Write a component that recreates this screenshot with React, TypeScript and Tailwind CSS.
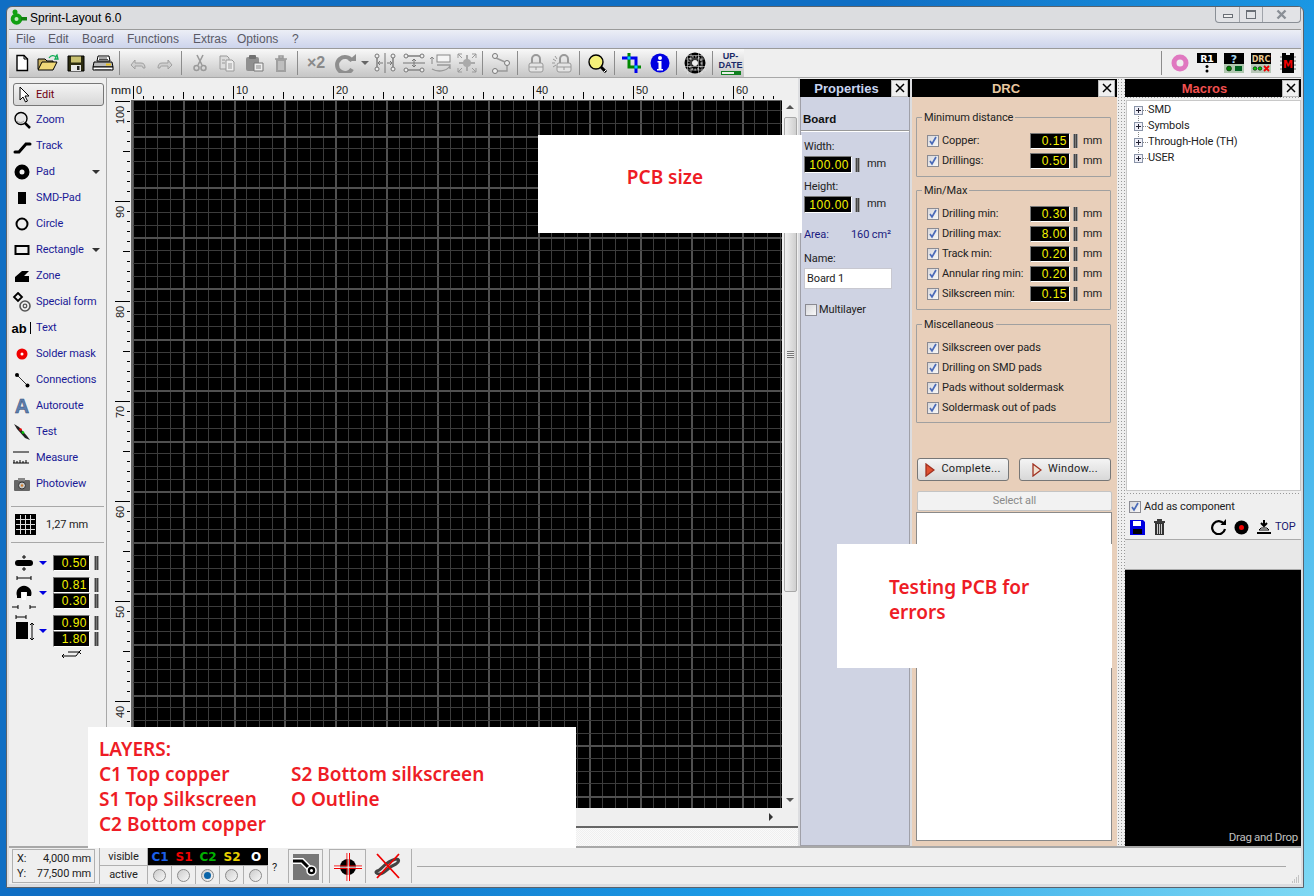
import React from "react";

const ui = "font-['Roboto',Arial,sans-serif] tracking-[-0.1px]";
const lib = "font-['Liberation_Sans',Arial,sans-serif] tracking-normal";

function S({ w = 20, h = 20, children }: { w?: number; h?: number; children: React.ReactNode }) {
  return (
    <svg width={w} height={h} viewBox={`0 0 ${w} ${h}`} className="block shrink-0">
      {children}
    </svg>
  );
}

const G = "#9a9a9a";

const tb: Record<string, React.ReactNode> = {
  newf: (
    <S><path d="M5 2.500h7l3.500 3.500v11.500H5z" fill="#fff" stroke="#000" strokeWidth="1.400" /><path d="M12 2.500v3.500h3.500" fill="none" stroke="#000" /></S>
  ),
  open: (
    <S w={24}><path d="M2 6h7l2 2h6v8H2z" fill="#c8b060" stroke="#000" /><path d="M2 17l4-8h15l-4 8z" fill="#f0d878" stroke="#000" /><path d="M13 5c2-3 5-3 7-1l-1 2 3 0-1-4-1 1" fill="none" stroke="#1a5" strokeWidth="1.300" /></S>
  ),
  save: (
    <S><path d="M2 3h16v15H2z" fill="#2c2c10" stroke="#000" /><rect x="5" y="3.500" width="10" height="6" fill="#c8c070" /><rect x="5" y="12" width="10" height="6" fill="#e8e8e8" /><rect x="11" y="13" width="2.500" height="4" fill="#222" /></S>
  ),
  print: (
    <S w={24}><path d="M7 3h11l1 5H6z" fill="#fff" stroke="#000" /><path d="M8 5h8M8 6.500h9" stroke="#000" strokeWidth=".7" /><path d="M3 9h18l1 5H2z" fill="#bbb" stroke="#000" /><path d="M2 14h20v3H2z" fill="#fff" stroke="#000" /><path d="M4 16.500h16" stroke="#555" /><rect x="15" y="10.500" width="5" height="2" fill="#e8c020" /></S>
  ),
  undo: (
    <S w={22}><path d="M4 12l4-5v3h6c3 0 4 2 4 5h-2c0-2-1-2-3-2H8v3z" fill="#cfcfcf" stroke="#a0a0a0" /></S>
  ),
  redo: (
    <S w={22}><path d="M18 12l-4-5v3H8c-3 0-4 2-4 5h2c0-2 1-2 3-2h5v3z" fill="#cfcfcf" stroke="#a0a0a0" /></S>
  ),
  cut: (
    <S><path d="M7 2l5 10M13 2l-5 10" stroke={G} strokeWidth="1.600" /><circle cx="6.500" cy="15" r="2.500" fill="none" stroke={G} strokeWidth="1.500" /><circle cx="13.500" cy="15" r="2.500" fill="none" stroke={G} strokeWidth="1.500" /></S>
  ),
  copy: (
    <S><path d="M3 3h7l2 2v11H3z" fill="#ddd" stroke={G} /><path d="M9 7h6l2 2v9H9z" fill="#eee" stroke={G} /><path d="M5 7h3M5 10h3M11 11h4M11 13h4M11 15h4" stroke={G} /></S>
  ),
  paste: (
    <S w={22}><rect x="3" y="4" width="13" height="14" rx="2" fill="#909090" /><rect x="6" y="2" width="7" height="4" rx="1" fill="#707070" /><path d="M11 10h9v8h-9z" fill="#eee" stroke="#777" /><path d="M13 13h5M13 15h5" stroke="#888" /></S>
  ),
  trash: (
    <S><path d="M4 6h12M8 3h4v2H8z" stroke={G} strokeWidth="1.500" fill="none" /><rect x="5" y="6" width="10" height="13" fill="#a0a0a0" /><path d="M8 8v9M10 8v9M12 8v9" stroke="#ddd" /></S>
  ),
  rotate: (
    <S w={24}><path d="M19 8a8 8 0 1 0 0 8" fill="none" stroke="#8e8e8e" strokeWidth="4" /><path d="M15 8h8V1z" fill="#8e8e8e" /></S>
  ),
  mirror: (
    <S w={28} h={22}><path d="M14 1v20" stroke="#777" /><path d="M6 4v13M22 4v13" stroke="#999" strokeWidth="2" /><circle cx="6" cy="4" r="2" fill="#eee" stroke="#777" /><circle cx="6" cy="17" r="2" fill="#eee" stroke="#777" /><circle cx="22" cy="4" r="2" fill="#eee" stroke="#777" /><circle cx="22" cy="17" r="2" fill="#eee" stroke="#777" /><path d="M8 11h4M16 11h4M9 9l-2 2 2 2M19 9l2 2-2 2" stroke="#777" fill="none" /></S>
  ),
  mirror2: (
    <S w={28} h={22}><path d="M3 11h22" stroke="#777" /><path d="M7 4h14M7 18h14" stroke="#999" strokeWidth="2" /><circle cx="6" cy="4" r="2" fill="#eee" stroke="#777" /><circle cx="22" cy="4" r="2" fill="#eee" stroke="#777" /><circle cx="6" cy="18" r="2" fill="#eee" stroke="#777" /><circle cx="22" cy="18" r="2" fill="#eee" stroke="#777" /><path d="M14 7v8M12 9l2-2 2 2M12 13l2 2 2-2" stroke="#777" fill="none" /></S>
  ),
  flip: (
    <S w={26} h={22}><path d="M4 12V5M2 7l2-2 2 2" stroke="#888" fill="none" /><rect x="9" y="3" width="13" height="7" fill="#f4f4f4" stroke="#888" /><path d="M4 17c5 3 14 3 18-3M9 13l13 0v4" fill="none" stroke="#999" strokeWidth="1.300" /></S>
  ),
  align: (
    <S w={24} h={22}><circle cx="12" cy="11" r="4" fill="#aaa" /><path d="M12 3v16M4 11h16" stroke="#aaa" strokeWidth="2" /><path d="M3 2l4 4M21 2l-4 4M3 20l4-4M21 20l-4-4M3 6V2h4M21 6V2h-4M3 16v4h4M21 16v4h-4" stroke="#999" fill="none" /></S>
  ),
  conn: (
    <S w={22} h={22}><circle cx="5" cy="4" r="2.500" fill="#eee" stroke="#777" /><circle cx="17" cy="11" r="2.500" fill="#eee" stroke="#777" /><circle cx="5" cy="19" r="2.500" fill="#eee" stroke="#777" /><path d="M6 6l9 4M8 19h9v-5" stroke="#999" strokeWidth="1.400" fill="none" /></S>
  ),
  lock: (
    <S><path d="M6 10V6a4 4 0 0 1 8 0v4" fill="none" stroke="#999" strokeWidth="2" /><rect x="3" y="10" width="14" height="9" rx="2" fill="#e4e4e4" stroke="#999" /><path d="M3 14h14M10 14v3" stroke="#999" /></S>
  ),
  lock2: (
    <S w={22}><path d="M8 10V6a4 4 0 0 1 8 0v4" fill="none" stroke="#999" strokeWidth="2" /><rect x="5" y="10" width="14" height="9" rx="2" fill="#e4e4e4" stroke="#999" /><path d="M5 14h14M12 14v3M1 6l3 2M0 10h3M1 14l3-2M3 3l2 3" stroke="#999" /></S>
  ),
  mag: (
    <S w={22}><circle cx="9" cy="9" r="7" fill="#f4f07a" stroke="#000" strokeWidth="1.400" /><path d="M14 14l5 5" stroke="#000" strokeWidth="3" /><path d="M17 19l2-2" stroke="#fff" /></S>
  ),
  crop: (
    <S w={22} h={22}>
      <path d="M7 1V15H19" fill="none" stroke="#008800" strokeWidth="3" />
      <path d="M0 6H14V21" fill="none" stroke="#0000ee" strokeWidth="3" />
      <rect x="5.500" y="4.500" width="3" height="3" fill="#00d8e8" />
      <rect x="12.500" y="13.500" width="3" height="3" fill="#00d8e8" />
    </S>
  ),
  info: (
    <S><circle cx="10" cy="10" r="9.500" fill="#0000e0" /><circle cx="10" cy="5" r="2" fill="#fff" /><path d="M7.500 8h4v8h1.500v1.500H7V16h1.500V9.500h-1z" fill="#fff" /></S>
  ),
  disc: (
    <S w={22} h={22}>
      <circle cx="11" cy="11" r="10.500" fill="#000" />
      <circle cx="11" cy="11" r="3" fill="#eee" />
      <circle cx="11" cy="11" r="6.500" fill="none" stroke="#8a8a8a" strokeWidth="2" strokeDasharray="1.500 1.500" />
      <path d="M0 3.500h22M0 7h22M0 14.500h22M0 18h22M3.500 0v22M7 0v22M14.500 0v22M18 0v22" stroke="#efefef" strokeWidth=".5" />
    </S>
  ),
  update: (
    <div className={`flex flex-col items-center w-[22px] mt-[1px] ${lib}`}>
      <span className="text-[9px] leading-[8px] font-bold text-[#1a2a68]">UP-</span>
      <span className="text-[9px] leading-[10px] font-bold text-[#1a2a68]">DATE</span>
      <span className="block w-[20px] h-[4px] mt-[1px] bg-[#108020] border border-[#108020] pr-[6px]"><span className="block h-full bg-[#e8f0e8]" /></span>
    </div>
  ),
  pink: (
    <S><circle cx="10" cy="10" r="6" fill="none" stroke="#e078c0" strokeWidth="5" /></S>
  ),
  r1: (
    <S w={22} h={22}><rect x="1" y="1" width="20" height="10" fill="#000" /><text x="11" y="9.500" textAnchor="middle" fontSize="9.500" fontWeight="700" fill="#fff" fontFamily="DejaVu Sans">R1</text><circle cx="11" cy="14.500" r="1.500" fill="#000" /><circle cx="11" cy="19" r="1.500" fill="#000" /></S>
  ),
  q: (
    <S w={22} h={22}><rect x="1" y="1" width="20" height="11" fill="#000" /><text x="11" y="10.500" textAnchor="middle" fontSize="11" fontWeight="700" fill="#a8d8f0" fontFamily="DejaVu Sans">?</text><rect x="1" y="12" width="20" height="9" fill="#b0c8b0" /><circle cx="6" cy="16.500" r="2.500" fill="#008000" stroke="#000" strokeWidth=".5" /><rect x="12" y="14" width="7" height="5" fill="#006020" /></S>
  ),
  drc: (
    <S w={22} h={22}><rect x="1" y="1" width="20" height="11" fill="#000" /><text x="11" y="10" textAnchor="middle" fontSize="8" fontWeight="700" fill="#e8c890" fontFamily="DejaVu Sans">DRC</text><rect x="1" y="12" width="20" height="9" fill="#b8c8b8" /><circle cx="5" cy="16.500" r="1.800" fill="#0c0" stroke="#000" strokeWidth=".6" /><circle cx="10" cy="16.500" r="1.800" fill="#0c0" stroke="#000" strokeWidth=".6" /><path d="M14 14l5 5M19 14l-5 5" stroke="#e00" strokeWidth="1.800" /></S>
  ),
  m: (
    <S w={22} h={22}><path d="M5 1h4v2h4V1h4v20H5z" fill="#000" /><text x="11" y="16" textAnchor="middle" fontSize="10" fontWeight="700" fill="#f00000" fontFamily="DejaVu Sans">M</text><path d="M3 5h2M3 9h2M3 13h2M3 17h2M17 5h2M17 9h2M17 13h2M17 17h2" stroke="#666" /></S>
  ),
};

function TB({ w = 27, k, children }: { w?: number; k?: string; children?: React.ReactNode }) {
  return <div className="flex items-center justify-center h-full shrink-0" style={{ width: w }}>{k ? tb[k] : children}</div>;
}

function TSep() {
  return <div className="w-px h-[24px] self-center bg-[#8c8c8c] shrink-0" />;
}

function Group({ children }: { children: React.ReactNode }) {
  return <div className="flex h-full pl-[4px] pr-[3px] shrink-0">{children}</div>;
}

function Toolbar() {
  return (
    <div className="flex h-[29px] bg-[#efefef] border-b border-[#a8a8a8] shrink-0">
      <div className="flex h-full bg-gradient-to-b from-[#f8f8f8] to-[#c6c6c6]">
        <div className="flex h-full pr-[3px]">
          <TB w={25} k="newf" /><TB w={28} k="open" /><TB w={28} k="save" /><TB w={26} k="print" />
        </div>
        <TSep />
        <Group><TB k="undo" /><TB k="redo" /></Group>
        <TSep />
        <Group><TB k="cut" /><TB k="copy" /><TB k="paste" /><TB k="trash" /></Group>
        <TSep />
        <Group>
          <TB w={28}><span className={`${lib} font-bold text-[16px] text-[#8a8a8a]`}>×2</span></TB>
          <TB w={30} k="rotate" />
          <TB w={10}><span className="block w-0 h-0 border-l-[4px] border-r-[4px] border-t-[4px] border-l-transparent border-r-transparent border-t-[#666]" /></TB>
          <TB w={30} k="mirror" /><TB k="mirror2" /><TB k="flip" /><TB w={25} k="align" />
        </Group>
        <TSep />
        <Group><TB k="conn" /></Group>
        <TSep />
        <Group><TB k="lock" /><TB k="lock2" /></Group>
        <TSep />
        <Group><TB k="mag" /></Group>
        <TSep />
        <Group><TB k="crop" /><TB k="info" /></Group>
        <TSep />
        <div className="flex h-full pl-[4px] pr-[4px]"><TB k="disc" /></div>
        <TSep />
        <div className="flex h-full pl-[4px]"><TB k="update" /></div>
      </div>
      <div className="flex h-full ml-auto bg-[#efefef]">
        <TSep />
        <div className="flex h-full pl-[4px]">
          <TB k="pink" /><TB k="r1" /><TB k="q" /><TB k="drc" /><TB k="m" />
        </div>
      </div>
    </div>
  );
}

const tools: [string, React.ReactNode, boolean?][] = [
  ["Zoom", <S key="z"><circle cx="9" cy="8.500" r="6" fill="#e8e8e8" stroke="#000" strokeWidth="1.400" /><path d="M5 11c2 2 5 2 7 0" stroke="#999" fill="none" /><path d="M13 13l5 5" stroke="#000" strokeWidth="2.500" /></S>],
  ["Track", <S key="t"><path d="M3 16h4l7-8h4" fill="none" stroke="#000" strokeWidth="3" strokeLinecap="round" /></S>],
  ["Pad", <S key="p"><circle cx="10" cy="10" r="5" fill="none" stroke="#000" strokeWidth="5" /></S>, true],
  ["SMD-Pad", <S key="s"><rect x="6" y="4" width="8" height="12" fill="#000" /></S>],
  ["Circle", <S key="c"><circle cx="10" cy="10" r="5.500" fill="none" stroke="#000" strokeWidth="2" /></S>],
  ["Rectangle", <S key="r"><rect x="3.500" y="6" width="13" height="8" fill="none" stroke="#000" strokeWidth="2" /></S>, true],
  ["Zone", <S key="zo"><path d="M3 16V11l7-6h7l-5 5h5v6z" fill="#000" /></S>],
  ["Special form", <S key="sf"><path d="M6 1l4 4-4 4-4-4z" fill="none" stroke="#000" strokeWidth="1.800" /><circle cx="13" cy="14" r="5" fill="none" stroke="#555" strokeWidth="1.600" /><circle cx="13" cy="14" r="1.800" fill="none" stroke="#555" strokeWidth="1.300" /></S>],
  ["Text", <span key="tx" className={`flex w-[20px] items-center ${lib} font-bold text-[13px] leading-none text-black -ml-[1px]`}>ab<span className="block w-px h-[12px] bg-black ml-[3px]" /></span>],
  ["Solder mask", <S key="sm"><circle cx="10" cy="10" r="3.500" fill="#fff" stroke="#f00000" strokeWidth="4" /></S>],
  ["Connections", <S key="co"><path d="M5 5l10 10" stroke="#333" /><circle cx="5" cy="5" r="2" fill="#000" /><circle cx="15.500" cy="15.500" r="2" fill="#000" /></S>],
  ["Autoroute", <S key="a"><text x="10" y="17" textAnchor="middle" fontFamily="Liberation Sans" fontWeight="700" fontSize="20" fill="#5c7fb0" stroke="#334a70" strokeWidth=".5">A</text></S>],
  ["Test", <S key="te"><path d="M2 2l5 3 8 9 3 4-5-2-8-9z" fill="#222" /><circle cx="8.500" cy="7.500" r="1.300" fill="#e00" /><circle cx="11" cy="10.500" r="1.300" fill="#0c0" /></S>],
  ["Measure", <S key="me"><path d="M1 4h16M1 15h16M2 15v-3M5 15v-2M8 15v-3M11 15v-2M14 15v-3" stroke="#000" fill="none" /></S>],
  ["Photoview", <S key="ph"><rect x="2" y="6" width="16" height="11" rx="1" fill="#666" /><rect x="6" y="4" width="7" height="3" fill="#888" /><circle cx="10" cy="11.500" r="3.500" fill="#c8c8c8" stroke="#333" /><circle cx="10" cy="11.500" r="1.200" fill="#d08030" /></S>],
];

const tip = "w-0 h-0 border-l-[4px] border-r-[4px] border-t-[4px] border-l-transparent border-r-transparent";

function Spin({ h = 14 }: { h?: number }) {
  return (
    <span
      className="block w-[5px] shrink-0 bg-[linear-gradient(to_right,#d0d0d0,#444_30%,#777_50%,#444_70%,#d0d0d0)]"
      style={{ height: h }}
    />
  );
}

function Field({ v, w = 37, h = 16 }: { v: string; w?: number; h?: number }) {
  return (
    <span
      className={`flex items-center justify-end shrink-0 bg-black border border-t-[#777] border-l-[#777] border-b-white border-r-white pr-[2px] font-['Liberation_Sans',Arial,sans-serif] tracking-[0.5px] text-[#f4f400] text-[12px] leading-none`}
      style={{ width: w, height: h }}
    >
      {v}
    </span>
  );
}

function Sidebar() {
  return (
    <div className="w-[98px] shrink-0 bg-[#efefef] border-r border-[#a8a8a8] pt-[3px] text-[11px]">
      <div className="h-[26px] flex items-center pl-[4px] pt-[1px]">
        <div className="flex items-center w-[91px] h-[23px] rounded-[3px] border border-[#777] bg-gradient-to-b from-[#f4f4f4] to-[#d8d8d8] pl-[4px]">
          <svg width="14" height="18" viewBox="0 0 14 18" className="shrink-0"><path d="M2 1v13l3-3 2.500 5 2-1-2.500-5h4z" fill="#fff" stroke="#000" /></svg>
          <span className="ml-[4px] pt-[1px] text-[#700010]">Edit</span>
        </div>
      </div>
      {tools.map(([label, icon, arrow]) => (
        <div key={label} className="h-[26px] flex items-center pl-[3px]">
          <span className="flex items-center justify-center w-[20px] h-[20px] shrink-0">{icon}</span>
          <span className="ml-[4px] pt-[1px] text-[#1a1a96] whitespace-nowrap">{label}</span>
          {arrow && <span className={`${tip} border-t-[#333] ml-auto mr-[6px]`} />}
        </div>
      ))}
      <div className="mt-[9px] mx-[2px] border-t border-[#a8a8a8]" />
      <div className="h-[35px] flex items-center pl-[6px]">
        <svg width="21" height="21" viewBox="0 0 21 21" className="shrink-0">
          <rect width="21" height="21" fill="#000" />
          <path d="M1 5.500h19M1 10.500h19M1 15.500h19M5.500 1v19M10.500 1v19M15.500 1v19" stroke="#ddd" />
        </svg>
        <span className="ml-[10px] pt-[1px] text-[#222]">1,27 mm</span>
      </div>
      <div className="mx-[2px] border-t border-[#a8a8a8]" />
      <div className="mt-[12px] flex flex-col pl-[2px]">
        <div className="flex items-center h-[16px]">
          <span className="w-[26px] flex justify-center">
            <svg width="22" height="16" viewBox="0 0 22 16"><rect x="2" y="5" width="18" height="6" rx="3" fill="#000" /><path d="M11 0v4M11 12v4M9 2h4M9 14h4" stroke="#000" /></svg>
          </span>
          <span className={`${tip} border-t-[#0000e0] ml-[2px] mr-[6px]`} />
          <Field v="0.50" /><span className="ml-[4px]"><Spin /></span>
        </div>
        <div className="flex items-center h-[32px] mt-[6px]">
          <span className="w-[26px] flex justify-center">
            <svg width="24" height="36" viewBox="0 0 24 36"><path d="M5 3h14M5 1v4M19 1v4" stroke="#000" /><path d="M5 21a7.500 7.500 0 1 1 14 0h-4v-4h-6v6H5z" fill="#000" /><rect x="10" y="17" width="4" height="8" fill="#fff" /><path d="M0 32h6M18 32h6M6 30v4M18 30v4" stroke="#000" /></svg>
          </span>
          <span className={`${tip} border-t-[#0000e0] ml-[2px] mr-[6px]`} />
          <div className="flex flex-col">
            <span className="flex items-center"><Field v="0.81" /><span className="ml-[4px]"><Spin /></span></span>
            <span className="flex items-center"><Field v="0.30" /><span className="ml-[4px]"><Spin /></span></span>
          </div>
        </div>
        <div className="flex items-center h-[32px] mt-[6px]">
          <span className="w-[26px] flex justify-center">
            <svg width="24" height="34" viewBox="0 0 24 34"><path d="M4 3h10M4 1v4M14 1v4" stroke="#000" /><rect x="4" y="8" width="12" height="17" fill="#000" /><path d="M20 9v17M18 11l2-2 2 2M18 24l2 2 2-2" stroke="#000" fill="none" /></svg>
          </span>
          <span className={`${tip} border-t-[#0000e0] ml-[2px] mr-[6px]`} />
          <div className="flex flex-col">
            <span className="flex items-center"><Field v="0.90" /><span className="ml-[4px]"><Spin /></span></span>
            <span className="flex items-center"><Field v="1.80" /><span className="ml-[4px]"><Spin /></span></span>
          </div>
        </div>
        <svg width="22" height="8" viewBox="0 0 22 8" className="ml-[50px] mt-[3px]"><path d="M1 6h14l3-4M3 4L1 6l2 2M7 2h11M18 2l2-2M18 2l2 2" stroke="#000" fill="none" /></svg>
      </div>
    </div>
  );
}

function range(n: number) {
  return Array.from({ length: n }, (_, i) => i);
}

function TopRuler() {
  return (
    <svg width="667" height="22" viewBox="0 0 667 22" className="block" shapeRendering="crispEdges">
      {range(65).map((i) => {
        const x = 2.5 + i * 10;
        const top = i % 10 === 0 ? 8 : i % 5 === 0 ? 14 : 18;
        return <path key={i} d={`M${x} ${top}V21`} stroke="#000" />;
      })}
      {range(7).map((i) => (
        <text key={i} x={5 + i * 100} y={16} fontSize="11" fontFamily="Liberation Sans" fill="#222">{i * 10}</text>
      ))}
    </svg>
  );
}

function LeftRuler() {
  return (
    <svg width="24" height="708" viewBox="0 0 24 708" className="block" shapeRendering="crispEdges">
      {range(70).map((i) => {
        const y = 1.5 + i * 10;
        const left = i % 10 === 0 ? 8 : i % 5 === 0 ? 16 : 20;
        return <path key={i} d={`M${left} ${y}H23`} stroke="#000" />;
      })}
      {range(7).map((i) => (
        <text key={i} x={0} y={0} fontSize="11" fontFamily="Liberation Sans" fill="#222" textAnchor="end" transform={`translate(17 ${6 + i * 100}) rotate(-90)`}>{100 - i * 10}</text>
      ))}
    </svg>
  );
}

function Board() {
  const vs = range(52).map((i) => Math.round(2 + i * 12.7));
  const hs = range(57).map((i) => Math.round(10.4 + i * 12.7));
  return (
    <svg width="651" height="708" viewBox="0 0 651 708" className="block" shapeRendering="crispEdges">
      <rect width="651" height="708" fill="#000" />
      {vs.map((x, i) => (
        <rect key={i} x={x - 1} y="0" width={i % 4 === 0 ? 2 : 1} height="708" fill={i % 4 === 0 ? "#505050" : "#3c3c3c"} />
      ))}
      {hs.map((y, i) => (
        <rect key={i} x="0" y={y} width="651" height={i % 4 === 2 ? 2 : 1} fill={i % 4 === 2 ? "#505050" : "#3c3c3c"} />
      ))}
      <rect width="2" height="708" fill="#666" />
      <rect width="651" height="1" fill="#666" />
    </svg>
  );
}

function Center() {
  return (
    <div className="w-[691px] mr-[2px] shrink-0 flex flex-col bg-[#efefef]">
      <div className="flex h-[22px] shrink-0">
        <div className="w-[24px] shrink-0 text-[11.500px] leading-[24px] text-[#111] pl-[4px]">mm</div>
        <TopRuler />
      </div>
      <div className="flex h-[708px] shrink-0">
        <div className="w-[24px] shrink-0"><LeftRuler /></div>
        <Board />
        <div className="w-[16px] shrink-0 flex flex-col items-center bg-[#f0f0f0]">
          <span className="mt-[5px] w-0 h-0 border-l-[4px] border-r-[4px] border-b-[4px] border-l-transparent border-r-transparent border-b-[#555]" />
          <div className="mt-[8px] w-[13px] h-[475px] rounded-[2px] border border-[#a8a8a8] bg-gradient-to-r from-[#f0f0f0] to-[#cfcfcf] flex items-center justify-center">
            <span className="block w-[7px] h-[7px] bg-[repeating-linear-gradient(to_bottom,#777_0,#777_1px,#eee_1px,#eee_2px)]" />
          </div>
          <span className="mt-auto mb-[6px] w-0 h-0 border-l-[4px] border-r-[4px] border-t-[4px] border-l-transparent border-r-transparent border-t-[#555]" />
        </div>
      </div>
      <div className="h-[18px] shrink-0 flex justify-end items-center bg-[#efefef] pr-[25px]">
        <span className="w-0 h-0 border-t-[4px] border-b-[4px] border-l-[4px] border-t-transparent border-b-transparent border-l-[#333]" />
      </div>
      <div className="flex-1 border-t-2 border-[#666] bg-[#f4f4f4] bg-[repeating-conic-gradient(#efefef_0_25%,#fafafa_0_50%)] bg-[length:2px_2px]" />
    </div>
  );
}

function Head({ title, color }: { title: string; color: string }) {
  return (
    <div className="flex items-center h-[18px] mt-[1px] bg-black shrink-0">
      <span className={`flex-1 pl-[2px] text-center ${lib} font-bold text-[13px] leading-none ${color}`}>{title}</span>
      <span className="flex items-center justify-center w-[17px] h-[17px] bg-[#efefef] border border-[#bbb] mr-[2px] shrink-0">
        <svg width="10" height="10" viewBox="0 0 10 10"><path d="M1 1l8 8M9 1l-8 8" stroke="#000" strokeWidth="1.500" /></svg>
      </span>
    </div>
  );
}

function Check({ on = true }: { on?: boolean }) {
  return (
    <span className="block w-[12px] h-[12px] shrink-0 border border-[#8a8a92] bg-gradient-to-br from-[#d8d8dc] to-[#f8f8f8]">
      {on && (
        <svg width="10" height="10" viewBox="0 0 10 10" className="block"><path d="M2 5l2 3 4-7" fill="none" stroke="#4a6ab8" strokeWidth="1.700" /></svg>
      )}
    </span>
  );
}

function Properties() {
  return (
    <div className="w-[110px] mr-[2px] shrink-0 flex flex-col bg-[#efefef]">
      <Head title="Properties" color="text-[#c8d4f0]" />
      <div className="flex-1 bg-[#cfd3e3] border-l border-b border-r border-[#a0a0a8] text-[11px] text-[#222]">
        <div className={`h-[33px] pt-[15px] pl-[2px] ${lib} font-bold text-[11.500px] leading-[15px] text-[#111]`}>Board</div>
        <div className="h-[2px] bg-white border-t border-[#999]" />
        <div className="pl-[3px] mt-[8px] leading-[14px]">Width:</div>
        <div className="flex items-center mt-[2px] pl-[3px] h-[17px]">
          <Field v="100.00" w={48} h={17} /><span className="ml-[3px]"><Spin /></span><span className="ml-[7px]">mm</span>
        </div>
        <div className="pl-[3px] mt-[7px] leading-[14px]">Height:</div>
        <div className="flex items-center mt-[2px] pl-[3px] h-[17px]">
          <Field v="100.00" w={48} h={17} /><span className="ml-[3px]"><Spin /></span><span className="ml-[7px]">mm</span>
        </div>
        <div className="flex mt-[15px] pl-[3px] leading-[14px] text-[#1a1a80]">
          <span className="w-[47px]">Area:</span><span>160 cm²</span>
        </div>
        <div className="pl-[3px] mt-[10px] leading-[14px]">Name:</div>
        <div className="ml-[3px] mt-[2px] w-[88px] h-[21px] bg-white border border-[#c8c8d0] pl-[2px] leading-[19px]">Board 1</div>
        <div className="flex items-center mt-[14px] pl-[4px] h-[14px]"><Check on={false} /><span className="ml-[2px]">Multilayer</span></div>
      </div>
    </div>
  );
}

function Fieldset({ title, children, cls }: { title: string; children: React.ReactNode; cls: string }) {
  return (
    <div className={`relative ml-[4px] mr-[6px] border border-[#a0a0a0] rounded-[1px] ${cls}`}>
      <span className="absolute left-[5px] -top-[7px] px-[2px] bg-[#e8cfba] text-[11px] leading-[14px] text-[#222]">{title}</span>
      {children}
    </div>
  );
}

function DRow({ label, v }: { label: string; v?: string }) {
  return (
    <div className="flex items-center h-[20px] pl-[10px] text-[11px] text-[#222]">
      <Check />
      <span className="ml-[3px] pt-[1px] whitespace-nowrap">{label}</span>
      {v && (
        <span className="ml-auto flex items-center pr-[11px]">
          <Field v={v} w={40} h={16} /><span className="ml-[3px]"><Spin /></span><span className="ml-[5px] w-[16px]">mm</span>
        </span>
      )}
    </div>
  );
}

function PlayBtn({ label, hollow }: { label: string; hollow?: boolean }) {
  return (
    <div className="flex items-center justify-center w-[92px] h-[23px] rounded-[3px] border border-[#777] bg-gradient-to-b from-[#f4f4f4] to-[#d8d8d8] text-[11px] text-[#222] tracking-[0.3px]">
      <svg width="10" height="14" viewBox="0 0 10 14" className="mr-[6px]"><path d="M1 1l8 6-8 6z" fill={hollow ? "#f0e0d0" : "#e05030"} stroke="#a03020" strokeWidth="1.300" /></svg>
      {label}
    </div>
  );
}

function Drc() {
  return (
    <div className="w-[205px] shrink-0 flex flex-col bg-[#efefef]">
      <Head title="DRC" color="text-[#e8c8a0]" />
      <div className="flex-1 bg-[#e8cfba] flex flex-col pb-[5px]">
        <Fieldset title="Minimum distance" cls="mt-[20px] h-[60px] pt-[13px]">
          <DRow label="Copper:" v="0.15" />
          <DRow label="Drillings:" v="0.50" />
        </Fieldset>
        <Fieldset title="Min/Max" cls="mt-[13px] h-[120px] pt-[13px]">
          <DRow label="Drilling min:" v="0.30" />
          <DRow label="Drilling max:" v="8.00" />
          <DRow label="Track min:" v="0.20" />
          <DRow label="Annular ring min:" v="0.20" />
          <DRow label="Silkscreen min:" v="0.15" />
        </Fieldset>
        <Fieldset title="Miscellaneous" cls="mt-[14px] h-[99px] pt-[13px]">
          <DRow label="Silkscreen over pads" />
          <DRow label="Drilling on SMD pads" />
          <DRow label="Pads without soldermask" />
          <DRow label="Soldermask out of pads" />
        </Fieldset>
        <div className="flex justify-between mt-[35px] pl-[5px] pr-[6px]">
          <PlayBtn label="Complete..." />
          <PlayBtn label="Window..." hollow />
        </div>
        <div className="mt-[10px] ml-[5px] mr-[5px] h-[20px] rounded-[2px] border border-[#c4c4c4] bg-[#f2f2f2] text-center text-[11px] leading-[18px] text-[#8a8a8a]">Select all</div>
        <div className="mt-[1px] ml-[4px] mr-[5px] flex-1 bg-white border border-[#8a8a8a]" />
      </div>
    </div>
  );
}

function TreeRow({ label }: { label: string }) {
  return (
    <div className="flex items-center h-[16px] text-[11px] text-[#222]">
      <span className="flex items-center justify-center w-[9px] h-[9px] border border-[#8a94a8] bg-[#f0f0f8] shrink-0">
        <svg width="7" height="7" viewBox="0 0 7 7" className="block"><path d="M1 3.500h5M3.500 1v5" stroke="#223" /></svg>
      </span>
      <span className="w-[5px] border-t border-dotted border-[#888]" />
      <span className="pt-[1px] whitespace-nowrap">{label}</span>
    </div>
  );
}

function Macros() {
  return (
    <div className="w-[184px] shrink-0 flex flex-col pl-[8px] bg-[#efefef] bg-[radial-gradient(#999_0.7px,transparent_0.8px)] bg-[length:3px_3px]">
      <Head title="Macros" color="text-[#f05050]" />
      <div className="h-[3px] shrink-0" />
      <div className="h-[391px] shrink-0 ml-[1px] bg-white border border-[#c8c8c8] pl-[7px] pt-[1px] relative">
        <span className="absolute left-[11px] top-[12px] h-[48px] border-l border-dotted border-[#888]" />
        <div className="relative"><TreeRow label="SMD" /><TreeRow label="Symbols" /><TreeRow label="Through-Hole (TH)" /><TreeRow label="USER" /></div>
      </div>
      <div className="h-[5px] shrink-0" />
      <div className="flex-1 flex flex-col bg-[#efefef]">
        <div className="flex items-center h-[20px] pl-[4px] mt-[1px] shrink-0"><Check /><span className="ml-[3px] pt-[1px] text-[11px] text-[#222]">Add as component</span></div>
        <div className="flex items-center h-[20px] pl-[5px] shrink-0">
          <svg width="15" height="15" viewBox="0 0 15 15"><path d="M0 0h13l2 2v13H0z" fill="#0000e0" /><rect x="3" y="1" width="8" height="5" fill="#fff" /><rect x="3" y="9" width="9" height="5" fill="#000" /></svg>
          <svg width="15" height="17" viewBox="0 0 15 17" className="ml-[7px]"><path d="M2 3h11M5 1h5" stroke="#000" strokeWidth="1.500" /><rect x="3" y="4" width="9" height="12" fill="#333" /><path d="M5.500 5v10M7.500 5v10M9.500 5v10" stroke="#ccc" /></svg>
          <svg width="16" height="16" viewBox="0 0 16 16" className="ml-[43px]"><path d="M14 5a6.500 6.500 0 1 0 1 5" fill="none" stroke="#000" strokeWidth="2.200" /><path d="M10.500 6H16V0z" fill="#000" /></svg>
          <svg width="15" height="15" viewBox="0 0 15 15" className="ml-[8px]"><circle cx="7.500" cy="7.500" r="7" fill="#000" /><circle cx="7.500" cy="7.500" r="2.500" fill="#f00000" /></svg>
          <svg width="16" height="16" viewBox="0 0 16 16" className="ml-[7px]"><path d="M8 1v5M5 4l3 3 3-3" stroke="#000" strokeWidth="2" fill="none" /><path d="M3 11l2-2h6l2 2z" fill="#fff" stroke="#000" /><path d="M1 13h14v2H1z" fill="#000" /></svg>
          <span className="ml-[3px] text-[11px] text-[#1a1a70]">TOP</span>
        </div>
        <div className="h-[31px] mt-[2px] shrink-0 bg-[#e8e8e8] border-t border-b border-[#aaa]" />
        <div className="flex-1 bg-black flex items-end justify-end pr-[3px] pb-[1px] text-[11.500px] leading-[15px] text-[#c0c0c0] tracking-[-0.3px]">Drag and Drop</div>
      </div>
    </div>
  );
}

function Radio({ on }: { on?: boolean }) {
  return (
    <span className="flex items-center justify-center w-[13px] h-[13px] rounded-full border border-[#8a8a8a] bg-gradient-to-br from-[#ccc] to-[#f8f8f8]">
      {on && <span className="block w-[7px] h-[7px] rounded-full bg-[#0a64a8]" />}
    </span>
  );
}

function StatusBar() {
  const ly: [string, string][] = [["C1", "text-[#1c60e8]"], ["S1", "text-[#f00000]"], ["C2", "text-[#00b000]"], ["S2", "text-[#e8d000]"], ["O", "text-white"]];
  return (
    <div className="flex h-[37px] border-t border-[#a8a8a8] bg-[#efefef] text-[11px] text-[#222] shrink-0">
      <div className="ml-[3px] mt-[1px] w-[83px] h-[34px] border border-[#b0b0b0] flex flex-col justify-center pl-[4px] pr-[3px] leading-[15px]">
        <div className="flex justify-between"><span>X:</span><span>4,000 mm</span></div>
        <div className="flex justify-between"><span>Y:</span><span>77,500 mm</span></div>
      </div>
      <div className="ml-[4px] flex flex-col w-[169px] shrink-0">
        <div className="flex h-[18px] border-b border-[#b0b0b0]">
          <span className="w-[49px] text-center border-l border-r border-[#b0b0b0] leading-[17px]">visible</span>
          <div className="flex w-[120px] bg-black">
            {ly.map(([l, c]) => (
              <span key={l} className={`w-[24px] text-center font-bold text-[12px] leading-[18px] font-['DejaVu_Sans',sans-serif] ${c}`}>{l}</span>
            ))}
          </div>
        </div>
        <div className="flex h-[18px]">
          <span className="w-[49px] text-center border-l border-r border-[#b0b0b0] leading-[17px]">active</span>
          {ly.map(([l], i) => (
            <span key={l} className="w-[24px] flex items-center justify-center border-r border-[#b0b0b0]"><Radio on={i === 2} /></span>
          ))}
        </div>
      </div>
      <span className="ml-[4px] w-[14px] self-center mt-[4px] text-[11px] text-[#222]">?</span>
      <div className="ml-[2px] mt-[1px] w-[35px] h-[34px] border-l border-t border-r border-[#b0b0b0] flex items-center justify-center">
        <svg width="26" height="26" viewBox="0 0 26 26"><rect width="26" height="26" fill="#777" /><path d="M0 7h9l9 9" fill="none" stroke="#fff" strokeWidth="6" /><path d="M0 7h9l9 9" fill="none" stroke="#000" strokeWidth="3" /><circle cx="18.500" cy="16.500" r="4.500" fill="#000" stroke="#fff" strokeWidth="1.500" /><circle cx="18.500" cy="16.500" r="1.500" fill="#fff" /></svg>
      </div>
      <div className="ml-[6px] mt-[1px] w-[37px] h-[34px] border-l border-t border-r border-[#b0b0b0] flex items-center justify-center">
        <svg width="28" height="28" viewBox="0 0 28 28"><circle cx="14" cy="14" r="8" fill="#000" /><path d="M0 13h28M0 15.500h28M13 0v28M15.500 0v28" stroke="#f00000" /><path d="M0 14.200h28M14.200 0v28" stroke="#fff" /></svg>
      </div>
      <div className="ml-[3px] mt-[1px] w-[43px] h-[34px] border-r border-[#b0b0b0] flex items-center justify-start pl-[5px]">
        <svg width="28" height="26" viewBox="0 0 28 26"><path d="M3 18c5-1 7-9 19-12 4 0 3 3 0 5-8 3-10 9-16 10-4 0-5-2-3-3z" fill="none" stroke="#444" strokeWidth="3" /><path d="M3 1l22 24M25 1L3 25" stroke="#f00000" strokeWidth="1.800" /></svg>
      </div>
      <div className="flex-1 ml-[5px] mr-[13px] self-center border-t border-[#a8a8a8]" />
      <svg width="8" height="8" viewBox="0 0 8 8" className="self-end mb-[1px] mr-[1px] -ml-[7px]"><path d="M6 1h1M4 3h1M6 3h1M2 5h1M4 5h1M6 5h1M0 7h1M2 7h1M4 7h1M6 7h1" stroke="#999" /></svg>
    </div>
  );
}

function Note({ cls, children }: { cls: string; children: React.ReactNode }) {
  return (
    <div className={`absolute bg-white font-['Noto_Sans',sans-serif] tracking-normal font-semibold text-[19px] leading-[25px] text-[#ee1c25] ${cls}`}>{children}</div>
  );
}

export default function App() {
  return (
    <div className={`relative w-[1314px] h-[896px] overflow-hidden ${ui} bg-[linear-gradient(125deg,#0f6ec4_0%,#0f6ec4_45%,#1c9be6_70%,#7fd9f4_100%)]`}>
      <div className="ml-[6px] pt-[6px] w-[1298px]">
        <div className="w-full h-[882px] rounded-t-[6px] border border-[#59626c] bg-[#dcdde0] flex flex-col px-[2px] pb-[2px]">
          <div className="flex items-center h-[21px] shrink-0 -mx-[2px] pl-[3px]">
            <svg width="17" height="17" viewBox="0 0 17 17" className="shrink-0">
              <circle cx="6.500" cy="10" r="5.800" fill="#12a012" />
              <rect x="11" y="8" width="6" height="3.500" fill="#108010" />
              <circle cx="5" cy="3" r="2.500" fill="#12a012" />
              <circle cx="6.500" cy="10" r="2" fill="#bfe8bf" />
            </svg>
            <span className={`ml-[3px] ${lib} text-[12px] text-black`}>Sprint-Layout 6.0</span>
            <div className="ml-auto mr-[2px] -mt-[5px] flex h-[16px] w-[86px] border border-t-0 border-[#8a8f96] rounded-b-[4px] bg-[#e2e3e6] shrink-0">
              <span className="w-[24px] flex items-center justify-center border-r border-[#a0a4aa]"><span className="block mt-[3px] w-[10px] h-[4px] border border-[#6a6f76] bg-[#f0f0f0]" /></span>
              <span className="w-[23px] flex items-center justify-center border-r border-[#a0a4aa]"><span className="block w-[10px] h-[9px] border border-[#6a6f76] border-t-2" /></span>
              <span className="flex-1 flex items-center justify-center">
                <svg width="11" height="11" viewBox="0 0 11 11"><path d="M1.500 1.500l8 8M9.500 1.500l-8 8" stroke="#8a8f96" strokeWidth="2.400" /></svg>
              </span>
            </div>
          </div>
          <div className={`h-[20px] shrink-0 mt-[1px] border-t border-b border-[#9a9a9a] bg-gradient-to-b from-[#eceef6] to-[#cdd4ec] flex items-center ${lib} text-[12px] text-[#5a5a66] pl-[7px]`}>
            <span className="w-[32px]">File</span>
            <span className="w-[34px]">Edit</span>
            <span className="w-[45px]">Board</span>
            <span className="w-[66px]">Functions</span>
            <span className="w-[44px]">Extras</span>
            <span className="w-[55px]">Options</span>
            <span>?</span>
          </div>
          <Toolbar />
          <div className="flex h-[769px] shrink-0 border-b border-[#a8a8a8]">
            <Sidebar />
            <Center />
            <Properties />
            <Drc />
            <Macros />
          </div>
          <StatusBar />
        </div>
      </div>
      <Note cls="left-[538px] top-[135px] w-[264px] h-[98px] flex items-center justify-center pb-[14px] pr-[10px]">PCB size</Note>
      <Note cls="left-[837px] top-[544px] w-[275px] h-[124px] pl-[52px] pt-[31px]">Testing PCB for<br />errors</Note>
      <Note cls="left-[88px] top-[727px] w-[488px] h-[121px] pl-[11px] pt-[10px]">
        <div>LAYERS:</div>
        <div className="flex"><span className="w-[192px]">C1 Top copper</span><span>S2 Bottom silkscreen</span></div>
        <div className="flex"><span className="w-[192px]">S1 Top Silkscreen</span><span>O Outline</span></div>
        <div>C2 Bottom copper</div>
      </Note>
    </div>
  );
}
